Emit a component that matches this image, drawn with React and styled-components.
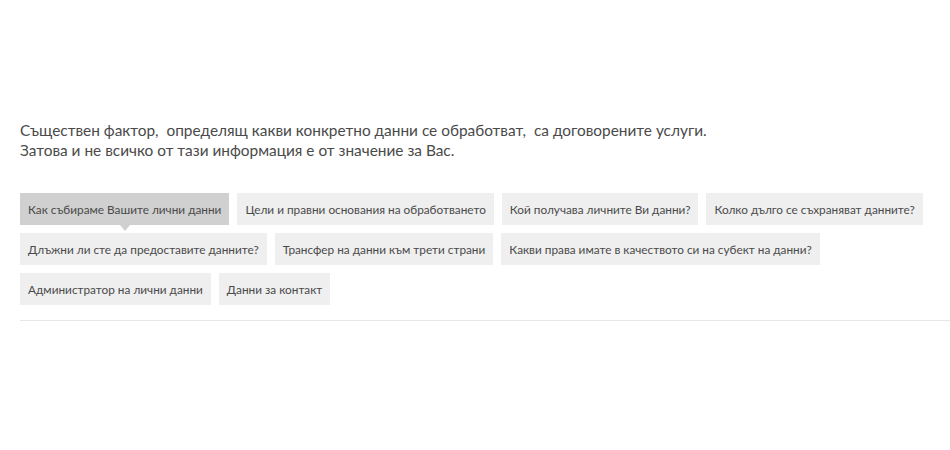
import React from "react";
import styled, { createGlobalStyle } from "styled-components";

const Global = createGlobalStyle`
  html, body { margin: 0; padding: 0; background: #fff; }
  body { font-family: "Lato", "Open Sans", sans-serif; color: #444; }
`;

const Page = styled.div`
  padding: 120px 0 0 20px;
  width: 930px;
`;

const Intro = styled.p`
  margin: 0;
  font-size: 15.4px;
  line-height: 20px;
  color: #4a4a4a;
  white-space: pre-wrap;
`;

const Tabs = styled.div`
  display: flex;
  flex-wrap: wrap;
  gap: 8px;
  margin-top: 33px;
  padding-bottom: 15px;
  border-bottom: 1px solid #e6e6e6;
  padding-right: 20px;
`;

const Tab = styled.button`
  position: relative;
  height: 32px;
  padding: 0 8px;
  border: none;
  font-family: inherit;
  font-size: 11.8px;
  color: #4a4a4a;
  background: ${(p) => (p.$active ? "#d0d0d0" : "#efefef")};
  cursor: pointer;
  &::after {
    content: "";
    display: ${(p) => (p.$active ? "block" : "none")};
    position: absolute;
    left: 50%;
    top: 100%;
    margin-left: -5px;
    border-left: 5px solid transparent;
    border-right: 5px solid transparent;
    border-top: 6px solid #d0d0d0;
  }
`;

const items = [
  "Как събираме Вашите лични данни",
  "Цели и правни основания на обработването",
  "Кой получава личните Ви данни?",
  "Колко дълго се съхраняват данните?",
  "Длъжни ли сте да предоставите данните?",
  "Трансфер на данни към трети страни",
  "Какви права имате в качеството си на субект на данни?",
  "Администратор на лични данни",
  "Данни за контакт",
];

export default function App() {
  return (
    <>
      <Global />
      <Page>
        <Intro>
          {"Съществен фактор,  определящ какви конкретно данни се обработват,  са договорените услуги.\nЗатова и не всичко от тази информация е от значение за Вас."}
        </Intro>
        <Tabs>
          {items.map((t, i) => (
            <Tab key={t} $active={i === 0}>{t}</Tab>
          ))}
        </Tabs>
      </Page>
    </>
  );
}
